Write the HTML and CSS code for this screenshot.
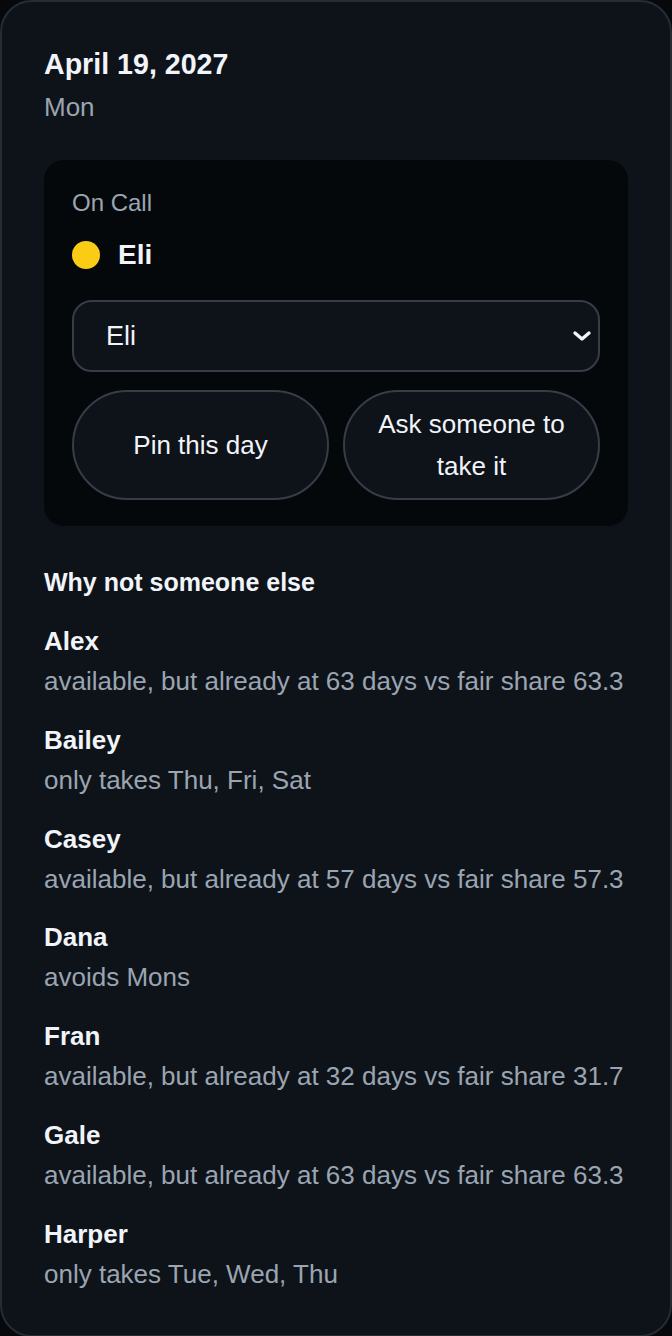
FILE: index.html
```html
<!DOCTYPE html>
<html lang="en">

<head>
  <meta charset="UTF-8">
  <meta name="viewport" content="width=device-width, initial-scale=1.0">
  <title>Day details</title>
  <link rel="stylesheet" href="styles.css">
</head>

<body>
  <!-- Day detail panel -->
  <div class="panel">
    <h2 class="day-title">April 19, 2027</h2>
    <div class="day-sub">Mon</div>

    <!-- Who is on call -->
    <div class="oncall-card">
      <div class="oncall-label">On Call</div>
      <div class="oncall-person">
        <span class="dot"></span>
        <span class="oncall-name">Eli</span>
      </div>

      <div class="select-wrap">
        <select class="person-select">
          <option>Eli</option>
          <option>Alex</option>
          <option>Bailey</option>
          <option>Casey</option>
          <option>Dana</option>
          <option>Fran</option>
          <option>Gale</option>
          <option>Harper</option>
        </select>
        <svg class="chevron" width="20" height="12" viewBox="0 0 20 12">
          <path d="M3 3 L10 9 L17 3" fill="none" stroke="#f1f4f8" stroke-width="3.4" stroke-linecap="round" stroke-linejoin="round" />
        </svg>
      </div>

      <div class="actions">
        <button type="button" class="pill">Pin this day</button>
        <button type="button" class="pill">Ask someone to take it</button>
      </div>
    </div>

    <!-- Reasons for the other people -->
    <h3 class="why-title">Why not someone else</h3>
    <ul class="reasons">
      <li>
        <div class="reason-name">Alex</div>
        <div class="reason-text">available, but already at 63 days vs fair share 63.3</div>
      </li>
      <li>
        <div class="reason-name">Bailey</div>
        <div class="reason-text">only takes Thu, Fri, Sat</div>
      </li>
      <li>
        <div class="reason-name">Casey</div>
        <div class="reason-text">available, but already at 57 days vs fair share 57.3</div>
      </li>
      <li>
        <div class="reason-name">Dana</div>
        <div class="reason-text">avoids Mons</div>
      </li>
      <li>
        <div class="reason-name">Fran</div>
        <div class="reason-text">available, but already at 32 days vs fair share 31.7</div>
      </li>
      <li>
        <div class="reason-name">Gale</div>
        <div class="reason-text">available, but already at 63 days vs fair share 63.3</div>
      </li>
      <li>
        <div class="reason-name">Harper</div>
        <div class="reason-text">only takes Tue, Wed, Thu</div>
      </li>
    </ul>
  </div>
</body>

</html>
```

FILE: styles.css
```css
/* Reset */
body,
html {
  margin: 0;
  padding: 0;
  font-family: "Liberation Sans", Arial, sans-serif;
}

body {
  background-color: #06080b;
  color: #f1f4f8;
}

/* Outer panel */
.panel {
  box-sizing: border-box;
  width: 672px;
  padding: 44px 42px 45px;
  background-color: #0e131a;
  border: 2px solid #262c34;
  border-radius: 32px;
}

.day-title {
  margin: 0;
  font-size: 28.6px;
  line-height: 36px;
  font-weight: bold;
  color: #f1f4f8;
}

.day-sub {
  margin-top: 9px;
  font-size: 26px;
  line-height: 32px;
  color: #9aa5b1;
}

/* On call card */
.oncall-card {
  margin-top: 37px;
  padding: 28px 28px 26px;
  background-color: #05080b;
  border-radius: 20px;
}

.oncall-label {
  font-size: 24px;
  line-height: 30px;
  color: #9aa5b1;
}

.oncall-person {
  display: flex;
  align-items: center;
  gap: 18px;
  margin-top: 19px;
  height: 36px;
}

.dot {
  width: 28px;
  height: 28px;
  border-radius: 50%;
  background-color: #facc15;
}

.oncall-name {
  font-size: 28px;
  font-weight: bold;
}

.select-wrap {
  position: relative;
  margin-top: 27px;
}

.person-select {
  appearance: none;
  -webkit-appearance: none;
  box-sizing: border-box;
  width: 100%;
  height: 72px;
  padding: 0 32px;
  font-family: inherit;
  font-size: 27px;
  color: #f1f4f8;
  background-color: #0e131a;
  border: 2px solid #363d46;
  border-radius: 20px;
}

.chevron {
  position: absolute;
  right: 8px;
  top: 30px;
  pointer-events: none;
}

.actions {
  display: grid;
  grid-template-columns: 1fr 1fr;
  gap: 14px;
  margin-top: 18px;
}

.pill {
  box-sizing: border-box;
  height: 110px;
  padding: 0 20px;
  font-family: inherit;
  font-size: 26px;
  line-height: 42px;
  color: #f1f4f8;
  background-color: #0e131a;
  border: 2px solid #363d46;
  border-radius: 55px;
  cursor: pointer;
}

/* Reasons list */
.why-title {
  margin: 40px 0 0;
  font-size: 25px;
  line-height: 32px;
  font-weight: bold;
}

.reasons {
  list-style: none;
  margin: 27px 0 0;
  padding: 0;
  display: flex;
  flex-direction: column;
  gap: 26.8px;
}

.reason-name {
  font-size: 26px;
  line-height: 32px;
  font-weight: bold;
}

.reason-text {
  margin-top: 8px;
  font-size: 26px;
  line-height: 32px;
  color: #9aa5b1;
}
```
